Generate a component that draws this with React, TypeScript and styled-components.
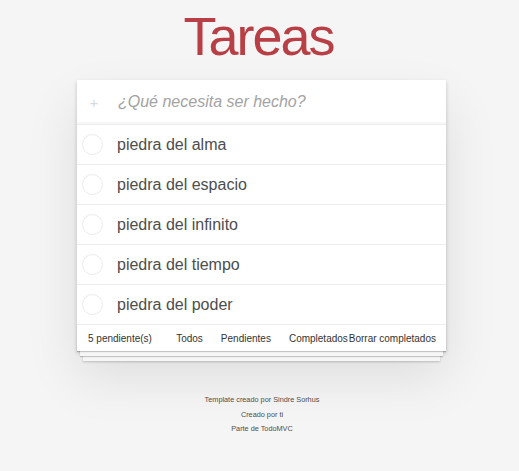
import React, { useState } from "react";
import styled, { createGlobalStyle } from "styled-components";

const GlobalStyle = createGlobalStyle`
  html, body {
    margin: 0;
    padding: 0;
    background: #f5f5f5;
    font-family: "Liberation Sans", Arial, Helvetica, sans-serif;
    -webkit-font-smoothing: antialiased;
  }
  * { box-sizing: border-box; }
`;

const Page = styled.div`
  display: flex;
  flex-direction: column;
  align-items: center;
  width: 519px;
`;

const Title = styled.h1`
  margin: 0;
  padding-top: 9px;
  height: 80px;
  font-size: 54px;
  line-height: 54px;
  font-weight: 400;
  letter-spacing: -2px;
  color: #b83f45;
  text-align: center;
  margin-right: 2px;
`;

const Panel = styled.section`
  width: 369px;
  margin-left: 4px;
  background: #fff;
  box-shadow: 0 2px 4px 0 rgba(0, 0, 0, 0.2), 0 25px 50px 0 rgba(0, 0, 0, 0.1);
`;

const Header = styled.header`
  display: flex;
  align-items: center;
  height: 45px;
  border-bottom: 1px solid #ededed;
  box-shadow: inset 0 -2px 1px rgba(0, 0, 0, 0.03);
`;

const ToggleAll = styled.span`
  width: 41px;
  text-align: center;
  padding-right: 7px;
  font-size: 15px;
  color: #d9d9d9;
  line-height: 1;
`;

const NewTodo = styled.input`
  flex: 1;
  border: none;
  outline: none;
  background: transparent;
  height: 100%;
  padding: 0 10px 0 0;
  font-family: "Liberation Sans", Arial, sans-serif;
  font-size: 16px;
  color: #4d4d4d;
  &::placeholder {
    font-style: italic;
    color: #a3a3a3;
  }
`;

const List = styled.ul`
  list-style: none;
  margin: 0;
  padding: 0;
`;

const Item = styled.li`
  display: flex;
  align-items: center;
  height: 40px;
  border-bottom: 1px solid #ededed;
`;

const Check = styled.input`
  appearance: none;
  -webkit-appearance: none;
  width: 21px;
  height: 21px;
  margin: 0 14px 0 5px;
  border-radius: 50%;
  border: 1px solid #ebebeb;
  background: #fff;
  flex: none;
`;

const Label = styled.label`
  font-size: 16px;
  color: #4d4d4d;
  padding-top: 1px;
`;

const Footer = styled.footer`
  position: relative;
  display: grid;
  grid-template-columns: 1fr auto 1fr;
  align-items: center;
  height: 26px;
  padding: 0 10px 0 11px;
  font-size: 10px;
  color: #333;
  &::before {
    content: "";
    position: absolute;
    left: 0;
    right: 0;
    bottom: 0;
    height: 100%;
    pointer-events: none;
    box-shadow: 0 1px 1px rgba(0, 0, 0, 0.2), 0 8px 0 -3px #f6f6f6,
      0 9px 1px -3px rgba(0, 0, 0, 0.2), 0 16px 0 -6px #f6f6f6,
      0 17px 2px -6px rgba(0, 0, 0, 0.2);
  }
`;

const Count = styled.span`
  justify-self: start;
`;

const Filters = styled.ul`
  display: flex;
  gap: 18px;
  list-style: none;
  margin: 0;
  padding: 0;
`;

const FilterLink = styled.a`
  color: inherit;
  text-decoration: none;
`;

const Clear = styled.button`
  justify-self: end;
  border: none;
  background: none;
  padding: 0;
  font-family: inherit;
  font-size: 10px;
  color: inherit;
  white-space: nowrap;
`;

const Info = styled.footer`
  margin-top: 42px;
  margin-left: 5px;
  text-align: center;
  font-size: 7.3px;
  line-height: 14.5px;
  color: #4d4d4d;
  & p {
    margin: 0;
  }
`;

const todos = [
  "piedra del alma",
  "piedra del espacio",
  "piedra del infinito",
  "piedra del tiempo",
  "piedra del poder",
];

export default function App() {
  const [text, setText] = useState("");
  return (
    <>
      <GlobalStyle />
      <Page>
        <Title>Tareas</Title>
        <Panel>
          <Header>
            <ToggleAll>+</ToggleAll>
            <NewTodo
              value={text}
              onChange={(e) => setText(e.target.value)}
              placeholder="¿Qué necesita ser hecho?"
            />
          </Header>
          <List>
            {todos.map((t) => (
              <Item key={t}>
                <Check type="checkbox" />
                <Label>{t}</Label>
              </Item>
            ))}
          </List>
          <Footer>
            <Count>5 pendiente(s)</Count>
            <Filters>
              <li><FilterLink href="#/">Todos</FilterLink></li>
              <li><FilterLink href="#/active">Pendientes</FilterLink></li>
              <li><FilterLink href="#/completed">Completados</FilterLink></li>
            </Filters>
            <Clear>Borrar completados</Clear>
          </Footer>
        </Panel>
        <Info>
          <p>Template creado por Sindre Sorhus</p>
          <p>Creado por ti</p>
          <p>Parte de TodoMVC</p>
        </Info>
      </Page>
    </>
  );
}
